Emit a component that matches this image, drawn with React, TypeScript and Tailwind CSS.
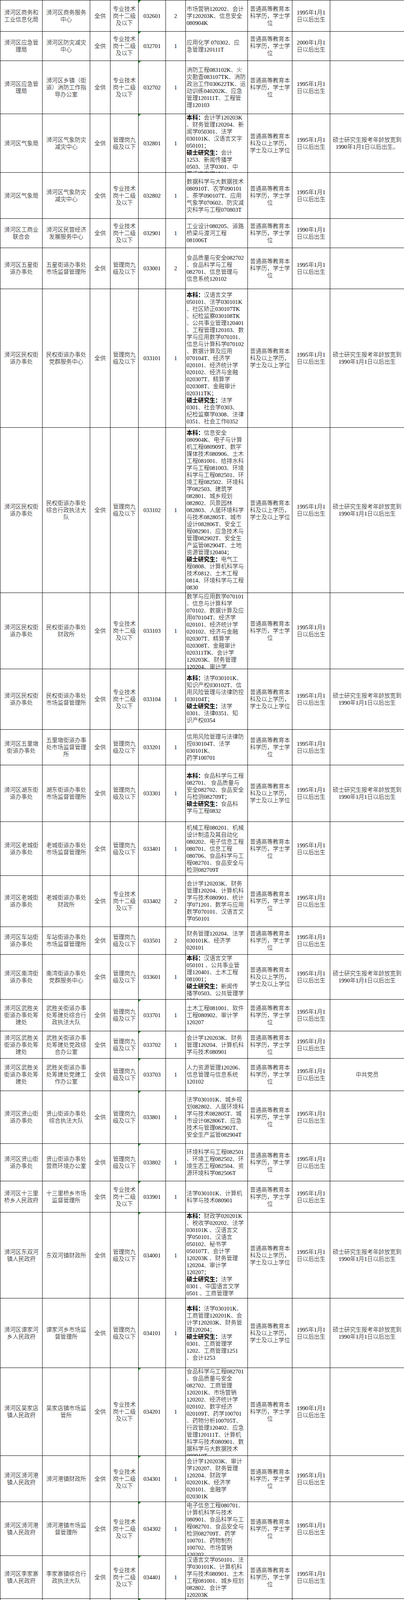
import React from 'react';

type Job = {
  h: string;
  unit: string;
  dept: string;
  post: 'tech' | 'mgmt';
  code: string;
  num: string;
  major: string[];
  edu: 'std' | 'up';
  born: string;
  note?: string;
  mark?: boolean;
};

const NOTE = '硕士研究生报考年龄放宽到\n1990年1月1日以后出生';
const MINQUAN = '浉河区民权街\n道办事处';
const WUSHENGGUAN = '浉河区武胜关\n街道办事处筹\n建处';

const POST = {
  tech: '专业技术\n岗十二级\n及以下',
  mgmt: '管理岗九\n级及以下',
};

const EDU = {
  std: '普通高等教育本\n科学历，学士学\n位',
  up: '普通高等教育本\n科及以上学历，\n学士及以上学位',
};

const jobs: Job[] = [
  {
    h: 'h-[80px]', unit: '浉河区商务和\n工业信息化局', dept: '浉河区商务服务\n中心', post: 'tech', code: '032601', num: '2',
    major: ['市场营销120202、会计', '学120203K、信息安全', '080904K'], edu: 'std', born: '1995', mark: true,
  },
  {
    h: 'h-[75px]', unit: '浉河区应急管\n理局', dept: '浉河区防灾减灾\n中心', post: 'tech', code: '032701', num: '1',
    major: ['应用化学 070302、应', '急管理120111T'], edu: 'std', born: '2000', mark: true,
  },
  {
    h: 'h-[136px]', unit: '浉河区应急管\n理局', dept: '浉河区乡镇（街\n道）消防工作指\n导办公室', post: 'tech', code: '032702', num: '1',
    major: ['消防工程083102K、火', '灾勘查083107TK、消防', '政治工作030622TK、运', '动训练040202K、应急', '管理120111T、工程管', '理120103'],
    edu: 'std', born: '1995', mark: true,
  },
  {
    h: 'h-[150px]', unit: '浉河区气象局', dept: '浉河区气象防灾\n减灾中心', post: 'mgmt', code: '032801', num: '1',
    major: ['本科：会计学120203K', '、财务管理120204、新', '闻学050301、法学', '030101K、汉语言文字', '050101；', '硕士研究生：会计', '1253、新闻传播学', '0503、法学0301、中', '国语言文学0501'],
    edu: 'up', born: '1995', note: '硕士研究生报考年龄放宽到\n1990年1月1日以后出生。', mark: true,
  },
  {
    h: 'h-[118px]', unit: '浉河区气象局', dept: '浉河区气象防灾\n减灾中心', post: 'tech', code: '032802', num: '1',
    major: ['数据科学与大数据技术', '080910T、农学090101', '、茶学090107T、应用', '气象学070602、防灾减', '灾科学与工程070803T'],
    edu: 'std', born: '1995',
  },
  {
    h: 'h-[75px]', unit: '浉河区工商业\n联合会', dept: '浉河区民营经济\n发展服务中心', post: 'tech', code: '032901', num: '1',
    major: ['工业设计080205、道路', '桥梁与渡河工程', '081006T'], edu: 'std', born: '1990',
  },
  {
    h: 'h-[105px]', unit: '浉河区五星街\n道办事处', dept: '五星街道办事处\n市场监督管理所', post: 'mgmt', code: '033001', num: '2',
    major: ['食品质量与安全082702', '、食品科学与工程', '082701、信息管理与', '信息系统120102'], edu: 'std', born: '1995',
  },
  {
    h: 'h-[355px]', unit: MINQUAN, dept: '民权街道办事处\n党群服务中心', post: 'mgmt', code: '033101', num: '1',
    major: [
      '本科：汉语言文学', '050101、法学030101K', '、社区矫正030107TK', '、纪检监察030108TK', '、公共事业管理120401',
      '、工程管理120103、数', '学与应用数学070101、', '信息与计算科学070102', '、数据计算及应用', '070104T、经济学',
      '020101、经济统计学', '020102、经济与金融', '020307T、精算学', '020308T、金融审计', '020311TK；',
      '硕士研究生：法学', '0301、社会学0303、', '纪检监察学0308、法律', '0351、社会工作0352',
    ],
    edu: 'up', born: '1995', note: NOTE,
  },
  {
    h: 'h-[423px]', unit: MINQUAN, dept: '民权街道办事处\n综合行政执法大\n队', post: 'mgmt', code: '033102', num: '1',
    major: [
      '本科：信息安全', '080904K、电子与计算', '机工程080909T、数字', '媒体技术080906、土木', '工程081001、给排水科',
      '学与工程081003、环境', '科学与工程082501、环', '境工程082502、环境科', '学082503、建筑学', '082801、城乡规划',
      '082802、风景园林', '082803、人居环境科学', '与技术082805T、城市', '设计082806T、安全工', '程082901、应急技术与',
      '管理082902T、安全生', '产监管082904T、土地', '资源管理120404；', '硕士研究生：电气工', '程0808、计算机科学与',
      '技术0812、土木工程', '0814、环境科学与工程', '0830',
    ],
    edu: 'up', born: '1995', note: NOTE,
  },
  {
    h: 'h-[195px]', unit: MINQUAN, dept: '民权街道办事处\n财政所', post: 'tech', code: '033103', num: '1',
    major: [
      '数学与应用数学070101', '、信息与计算科学', '070102、数据计算及应', '用070104T、经济学', '020101、经济统计学',
      '020102、经济与金融', '020307T、精算学', '020308T、金融审计', '020311TK、会计学', '120203K、财务管理',
      '120204、审计学', '120207',
    ],
    edu: 'std', born: '1995',
  },
  {
    h: 'h-[155px]', unit: MINQUAN, dept: '民权街道办事处\n市场监督管理所', post: 'tech', code: '033104', num: '1',
    major: ['本科：法学030101K、', '知识产权030102T、信', '用风险管理与法律防控', '030104T；', '硕士研究生：法学', '0301、法律0351、知', '识产权0354'],
    edu: 'up', born: '1995', note: NOTE,
  },
  {
    h: 'h-[91px]', unit: '浉河区五里墩\n街道办事处', dept: '五里墩街道办事\n处市场监督管理\n所', post: 'mgmt', code: '033201', num: '1',
    major: ['信用风险管理与法律防', '控030104T、法学', '030101K、', '药学100701'], edu: 'std', born: '1995',
  },
  {
    h: 'h-[145px]', unit: '浉河区湖东街\n道办事处', dept: '湖东街道办事处\n市场监督管理所', post: 'mgmt', code: '033301', num: '1',
    major: ['本科：食品科学与工程', '082701、 食品质量与', '安全082702、食品安全', '与检测082709T；', '硕士研究生：食品科', '学与工程0832'],
    edu: 'up', born: '1995', note: NOTE,
  },
  {
    h: 'h-[138px]', unit: '浉河区老城街\n道办事处', dept: '老城街道办事处\n市场监督管理所', post: 'mgmt', code: '033401', num: '1',
    major: ['机械工程080201、机械', '设计制造及其自动化', '080202、电子信息工程', '080701、信息工程', '080706、食品科学与工', '程082701、食品安全与', '检测082709T'],
    edu: 'std', born: '1995',
  },
  {
    h: 'h-[131px]', unit: '浉河区老城街\n道办事处', dept: '老城街道办事处\n财政所', post: 'tech', code: '033402', num: '2',
    major: ['会计学120203K、财务', '管理120204、计算机科', '学与技术080901、统计', '学071201、数学与应用', '数学070101、汉语言文', '学050101'],
    edu: 'std', born: '1995',
  },
  {
    h: 'h-[71px]', unit: '浉河区车站街\n道办事处', dept: '车站街道办事处\n市场监督管理所', post: 'mgmt', code: '033501', num: '2',
    major: ['财务管理120204、法学', '030101K、经济学', '020101'], edu: 'std', born: '1995',
  },
  {
    h: 'h-[115px]', unit: '浉河区南湾街\n道办事处', dept: '南湾街道办事处\n党群服务中心', post: 'mgmt', code: '033601', num: '1',
    major: ['本科：汉语言文学', '050101 、公共事业管', '理120401、土木工程', '081001；', '硕士研究生：新闻传', '播学0503、公共管理学', '1204'],
    edu: 'up', born: '1995', note: NOTE,
  },
  {
    h: 'h-[81px]', unit: WUSHENGGUAN, dept: '武胜关街道办事\n处筹建处综合行\n政执法大队', post: 'mgmt', code: '033701', num: '1',
    major: ['土木工程081001、软件', '工程080902、审计学', '120207'], edu: 'std', born: '1995', mark: true,
  },
  {
    h: 'h-[70px]', unit: WUSHENGGUAN, dept: '武胜关街道办事\n处筹建处党政综\n合办公室', post: 'mgmt', code: '033702', num: '1',
    major: ['会计学120203K、财务', '管理120204、计算机科', '学与技术080901'], edu: 'std', born: '1995', mark: true,
  },
  {
    h: 'h-[83px]', unit: WUSHENGGUAN, dept: '武胜关街道办事\n处筹建处党建工\n作办公室', post: 'mgmt', code: '033703', num: '1',
    major: ['人力资源管理120206、', '信息管理与信息系统', '120102'], edu: 'std', born: '1995', note: '中共党员', mark: true,
  },
  {
    h: 'h-[135px]', unit: '浉河区贤山街\n道办事处', dept: '贤山街道办事处\n综合执法大队', post: 'mgmt', code: '033801', num: '1',
    major: ['法学030101K、城乡规', '划082802、人居环境科', '学与技术082805T、城', '市设计082806T、应急', '技术与管理082902T、', '安全生产监管082904T'],
    edu: 'std', born: '1995', mark: true,
  },
  {
    h: 'h-[96px]', unit: '浉河区贤山街\n道办事处', dept: '贤山街道办事处\n营商环境办公室', post: 'mgmt', code: '033802', num: '1',
    major: ['环境科学与工程082501', '、环境工程082502、环', '境生态工程082504、资', '源环境科学082506T'],
    edu: 'std', born: '1995', mark: true,
  },
  {
    h: 'h-[80px]', unit: '浉河区十三里\n桥乡人民政府', dept: '十三里桥乡市场\n监督管理所', post: 'tech', code: '033901', num: '1',
    major: ['法学030101K、计算机', '科学与技术080901'], edu: 'std', born: '1995', mark: true,
  },
  {
    h: 'h-[220px]', unit: '浉河区东双河\n镇人民政府', dept: '东双河镇财政所', post: 'mgmt', code: '034001', num: '1',
    major: [
      '本科：财政学020201K', '、税收学020202、法学', '030101K 、汉语言文', '学050101、汉语言', '050102、秘书学',
      '050107T、会计学', '120203K 、财务管理', '120204、审计学', '120207；', '硕士研究生：法学',
      '0301 、中国语言文学', '0501 、工商管理学', '1202',
    ],
    edu: 'up', born: '1995', note: NOTE, mark: true,
  },
  {
    h: 'h-[178px]', unit: '浉河区谭家河\n乡人民政府', dept: '谭家河乡市场监\n督管理所', post: 'mgmt', code: '034101', num: '1',
    major: ['本科：法学030101K、', '工商管理120201K、会', '计学120203K、财务管', '理120204；', '硕士研究生：法学', '0301、工商管理学', '1202、工商管理1251', '、会计1253'],
    edu: 'up', born: '1995', note: NOTE,
  },
  {
    h: 'h-[225px]', unit: '浉河区吴家店\n镇人民政府', dept: '吴家店镇市场监\n管所', post: 'tech', code: '034201', num: '1',
    major: [
      '食品科学与工程082701', '、食品质量与安全', '082702、工商管理', '120201K、市场营销', '120202、经济统计学',
      '020102、数字经济', '020109T、药学100701', '、药物分析100705T、', '行政管理120402、应急', '管理120111T、计算机',
      '科学与技术080901、数', '据科学与大数据技术', '080910T',
    ],
    edu: 'std', born: '1990', mark: true,
  },
  {
    h: 'h-[118px]', unit: '浉河区浉河港\n镇人民政府', dept: '浉河港镇财政所', post: 'tech', code: '034301', num: '1',
    major: ['会计学120203K、审计', '学120207、财务管理', '120204、财政学', '020201K、经济学', '020101、金融学', '020301K'],
    edu: 'std', born: '1995', mark: true,
  },
  {
    h: 'h-[138px]', unit: '浉河区浉河港\n镇人民政府', dept: '浉河港镇市场监\n督管理所', post: 'tech', code: '034302', num: '1',
    major: ['电子信息工程080701、', '计算机科学与技术', '080901、食品科学与工', '程082701、食品安全与', '检测082709T、药学', '100701、药物制剂', '100702、市场营销', '120202'],
    edu: 'std', born: '1995', mark: true,
  },
  {
    h: 'h-[110px]', unit: '浉河区李家寨\n镇人民政府', dept: '李家寨镇综合行\n政执法大队', post: 'tech', code: '034401', num: '1',
    major: ['汉语言文学050101、法', '学030101K、计算机科', '学与技术080901、土木', '工程081001、城乡规划', '082802、会计学', '120203K'],
    edu: 'std', born: '1995', mark: true,
  },
  {
    h: 'h-[105px]', unit: '浉河区李家寨\n镇人民政府', dept: '李家寨镇产业发\n展服务中心', post: 'mgmt', code: '034402', num: '1',
    major: ['经济学020101、财政学', '020201K、国际经济与', '贸易020401、汉语言文', '学050101'],
    edu: 'std', born: '1995', mark: true,
  },
];

const Cell = ({ children, className = '' }: { children?: React.ReactNode; className?: string }) => (
  <div className={`relative flex overflow-hidden border-l border-t border-black [align-items:safe_center] ${className}`}>
    {children}
  </div>
);

const Lines = ({ text }: { text: string }) => (
  <div className="w-full">
    {text.split('\n').map((line, i) => (
      <div key={i} className="h-[18px] whitespace-nowrap text-center">
        {line}
      </div>
    ))}
  </div>
);

const MajorLine = ({ line }: { line: string }) => {
  const m = line.match(/^(本科：|硕士研究生：)(.*)$/);
  return (
    <div className="h-[18px] whitespace-nowrap">
      {m ? (
        <>
          <span className="font-bold">{m[1]}</span>
          {m[2]}
        </>
      ) : (
        line
      )}
    </div>
  );
};

const Mark = () => (
  <span className="absolute left-0 top-0 h-0 w-0 border-t-[6px] border-r-[6px] border-t-[#1a8a1a] border-r-transparent" />
);

export default function App() {
  return (
    <div className="w-[1035px] bg-white font-['Liberation_Serif','Noto_Sans_CJK_SC',serif] text-[14.67px] font-light leading-[18px] text-black">
      <div className="border-b border-black">
        {jobs.map((job) => (
          <div
            key={job.code}
            className={`grid grid-cols-[108px_122px_52px_72px_70px_51px_159px_114px_97px_1fr] ${job.h}`}
          >
            <Cell className="justify-center">
              <Lines text={job.unit} />
            </Cell>
            <Cell className="justify-center">
              <Lines text={job.dept} />
            </Cell>
            <Cell className="justify-center">
              <Lines text="全供" />
            </Cell>
            <Cell className="justify-center">
              <Lines text={POST[job.post]} />
            </Cell>
            <Cell className="justify-center">
              {job.mark && <Mark />}
              <Lines text={job.code} />
            </Cell>
            <Cell className="justify-center">
              <Lines text={job.num} />
            </Cell>
            <Cell className="pl-[2px]">
              <div className="w-full">
                {job.major.map((line, i) => (
                  <MajorLine key={i} line={line} />
                ))}
              </div>
            </Cell>
            <Cell className="justify-center">
              <Lines text={EDU[job.edu]} />
            </Cell>
            <Cell className="justify-center">
              <Lines text={`${job.born}年1月1\n日以后出生`} />
            </Cell>
            <Cell className="justify-center">
              {job.note && <Lines text={job.note} />}
            </Cell>
          </div>
        ))}
      </div>
    </div>
  );
}
